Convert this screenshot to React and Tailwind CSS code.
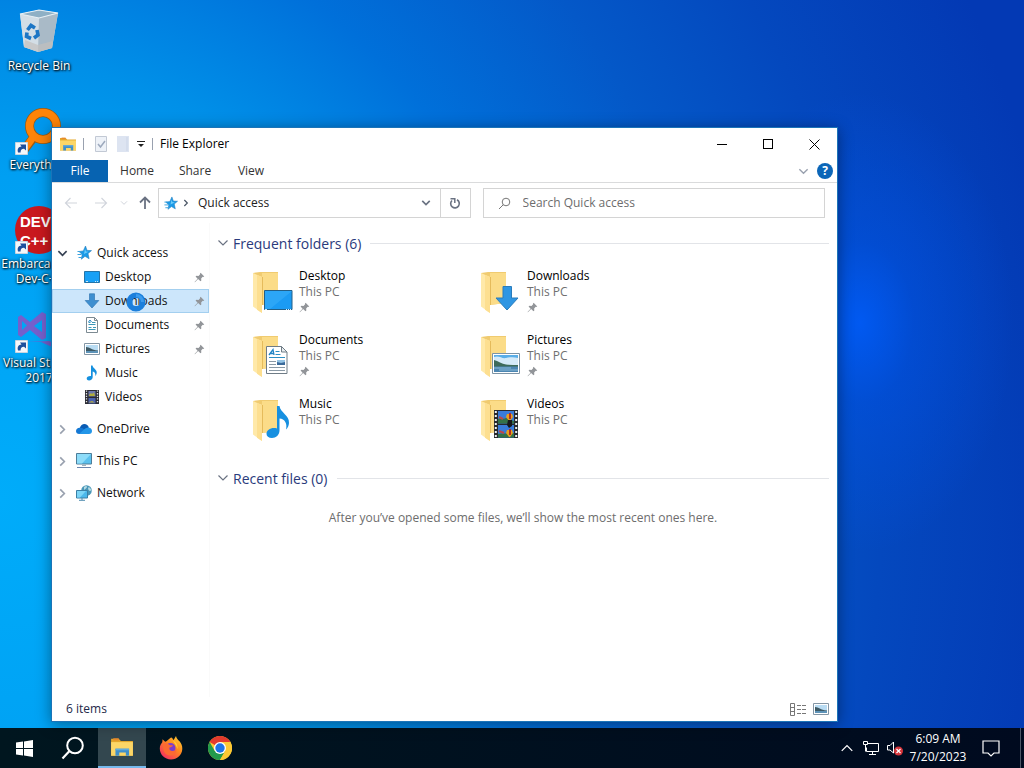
import React, { useState } from 'react';

/* ---------- Small icons ---------- */

const FolderIcon = ({ className }) => (
    <svg viewBox="0 0 22 20" className={className} aria-hidden="true">
        <path d="M1 2.500h7l2 2h11V18H1z" fill="#e3a72c" />
        <path d="M3 2h5v2H3z" fill="#e8892b" />
        <path d="M1 5.500h20V18H1z" fill="#fcd667" />
        <path d="M5 18v-6.500h12.500V18h-3v-3h-6v3z" fill="#3f8fcb" />
        <path d="M5 11.500h12.500v1.500H5z" fill="#62abdc" />
    </svg>
);

const StarIcon = ({ className }) => (
    <svg viewBox="0 0 16 16" className={className} aria-hidden="true">
        <path d="M9.500 1l1.500 4.400 4.500.2-3.500 3 1.100 5.100-4.100-2.400-3.700 2.900.9-4.700L3 6.500l4.300-.6z" fill="#1a9ae8" stroke="#2380c0" strokeWidth=".6" />
        <path d="M9 4l1 2.500 2.500.3L8 9z" fill="#6ccbf8" />
        <path d="M1.500 6.500h3M1.500 9.500h4M2.500 12.500h3" stroke="#39a2df" strokeWidth="1" />
    </svg>
);

const PinIcon = ({ className }) => (
    <svg viewBox="0 0 12 12" className={className} aria-hidden="true">
        <path d="M7.200.8l4 4-1.200.6-.5-.2L7.800 7l.2 2.300-.9.900-2.600-2.500L1 11.300l-.4-.4 3.300-3.600L1.700 5l1-.9 2.200.3L6.700 2.500l-.2-.6z" fill="#929599" />
    </svg>
);

const ChevronDown = ({ className, width = 1.5 }) => (
    <svg viewBox="0 0 12 12" className={className} aria-hidden="true">
        <path d="M1.500 3.500L6 8l4.500-4.500" fill="none" stroke="currentColor" strokeWidth={width} />
    </svg>
);

const ChevronRight = ({ className, width = 1.5 }) => (
    <svg viewBox="0 0 12 12" className={className} aria-hidden="true">
        <path d="M3.500 1.500L8 6l-4.500 4.500" fill="none" stroke="currentColor" strokeWidth={width} />
    </svg>
);

const ArrowIcon = ({ className, width = 1.2 }) => (
    <svg viewBox="0 0 14 14" className={className} aria-hidden="true">
        <path d="M13 7H1.500M6.500 2l-5 5 5 5" fill="none" stroke="currentColor" strokeWidth={width} />
    </svg>
);

const DesktopSmall = () => (
    <svg viewBox="0 0 16 16" className="size-4" aria-hidden="true">
        <path d="M.5 2.500h15v11H.5z" fill="#18a0f5" stroke="#2474a8" />
        <path d="M2 12.500h2M11 12.500h1M13 12.500h1" stroke="#c8e8fb" />
    </svg>
);

const DownloadSmall = () => (
    <svg viewBox="0 0 16 16" className="size-4" aria-hidden="true">
        <path d="M5.500.8h5v6.700h4.300L8 15 1.200 7.500h4.300z" fill="#3e8fd0" stroke="#3478b4" strokeWidth=".7" />
    </svg>
);

const DocumentSmall = () => (
    <svg viewBox="0 0 16 16" className="size-4" aria-hidden="true">
        <path d="M2.500.5h8l3 3v12h-11z" fill="#fff" stroke="#7d8a92" />
        <path d="M10.500.5v3h3" fill="none" stroke="#7d8a92" />
        <path d="M4.500 5.500h2M8 5.500h3.500M4.500 7.500h7M4.500 10.500h3M9 10.500h3M4.500 12.500h7" stroke="#3c97b8" />
        <path d="M4.500 5l1.500-2 1.500 2" fill="none" stroke="#2788c8" />
    </svg>
);

const PictureSmall = ({ className = 'size-4' }) => (
    <svg viewBox="0 0 16 16" className={className} aria-hidden="true">
        <path d="M.5 2.500h15v11H.5z" fill="#fff" stroke="#8496a5" />
        <path d="M2 4h12v8H2z" fill="#b9dcf3" />
        <path d="M2 6c4 0 5 3 12 3.500V10H2z" fill="#3d5964" />
        <path d="M2 10h12v2H2z" fill="#5d93b8" />
    </svg>
);

const MusicSmall = () => (
    <svg viewBox="0 0 16 16" className="size-4" aria-hidden="true">
        <path d="M7 .5h1.500c.4 3 4.700 4 4.200 7.500-.2 1.500-.8 2.300-1.500 3 .7-2.500-.5-4.300-2.500-4.500V12c0 2-1.700 3.500-3.700 3.500-1.300 0-2.300-.7-2.300-1.900C2.700 12 4.500 10.700 7 11z" fill="#1590df" />
    </svg>
);

const VideoSmall = () => (
    <svg viewBox="0 0 16 16" className="size-4" aria-hidden="true">
        <path d="M1 1h14v14H1z" fill="#2b2b33" />
        <path d="M2.500 1.500v13M13.500 1.500v13" stroke="#e3e3e3" strokeWidth="1.300" strokeDasharray="1.300 1.300" />
        <path d="M4.500 2h7v5.500h-7z" fill="#6d78ae" />
        <path d="M4.500 9h7v5.500h-7z" fill="#4d63ae" />
        <path d="M5 6l2-2 1 1 2-1.500 1 3.500H5zM5 13l3-1 3 1.500H5z" fill="#b3ae3d" />
    </svg>
);

const CloudIcon = () => (
    <svg viewBox="0 0 16 16" className="size-4" aria-hidden="true">
        <path d="M3.800 7C4.500 4.200 6.500 3 8.300 3c2.200 0 4 1.300 4.500 3.500L9 10z" fill="#0a5cb4" />
        <path d="M3.500 6.800c2-.5 3.500.5 5.500 2l4 4.200H3.200C1.300 13 0 11.700 0 10c0-1.800 1.500-3.200 3.500-3.200z" fill="#1478d4" />
        <path d="M8 8.500c1.500-1.500 3-2.200 4.800-2 2 .2 3.200 1.700 3.200 3.500 0 1.700-1.200 3-3 3H3z" fill="#2396e8" />
    </svg>
);

const ComputerIcon = () => (
    <svg viewBox="0 0 16 16" className="size-4" aria-hidden="true">
        <path d="M.5.5h15v10.500H.5z" fill="#5bc1ee" stroke="#4d7d99" />
        <path d="M1 1h14L6 10.500H1z" fill="#8ddcf9" />
        <path d="M6 11.500h4v1.500H6z" fill="#9fb1bd" />
        <path d="M1 14.500h14" stroke="#6a86ae" />
    </svg>
);

const NetworkIcon = () => (
    <svg viewBox="0 0 16 16" className="size-4" aria-hidden="true">
        <circle cx="10.500" cy="5.500" r="5.300" fill="#4a97b8" />
        <path d="M8 2c2-1.500 3-1 3 0S9 4 8 5zM12.500 2c1.500.5 2.800 2 3 3.500l-2 .5-1.500-2z" fill="#b5dbe4" />
        <path d="M.5 5.500h11v7.500H.5z" fill="#4cb8eb" stroke="#3b7fa5" />
        <path d="M1 6h9l-6 6.500H1z" fill="#7cd5f7" />
        <path d="M6 13v2M3 15.300h6" stroke="#4f8db0" />
    </svg>
);

/* ---------- Large folder tiles ---------- */

const overlays = {
    desktop: (
        <g>
            <path d="M11.500 18.500h27.500v19H11.500z" fill="#1b9bf3" stroke="#245f86" />
            <path d="M12 19h27L17 37h-5z" fill="#38adf8" opacity=".6" />
            <path d="M12 37.500h2M33 37.500h1M35 37.500h1M37 37.500h1" stroke="#d7effd" />
        </g>
    ),
    downloads: (
        <path d="M22 14.500h8.500V26H37L26 38 15 26h7z" fill="#2f96e3" stroke="#2a7cbc" />
    ),
    documents: (
        <g>
            <path d="M13.500 10.500h15l5.500 5.500v21.500H13.500z" fill="#fff" stroke="#6f7c86" />
            <path d="M28.500 10.500V16H34z" fill="#e8edf0" stroke="#6f7c86" />
            <path d="M16 19l4-5.500 1 5.500M17.500 17.500h3.500" fill="none" stroke="#1f83c5" strokeWidth="1.300" />
            <path d="M22.500 15.500h4M22.500 18.500h5M16 21.500h16" stroke="#2b8fc5" />
            <path d="M16 25.500h7M16 28.500h7M16 31.500h16M16 34.500h16" stroke="#8a99a5" />
            <path d="M24 24h8v5h-8z" fill="#3b6a9a" />
            <path d="M24 24h8v2l-4 1-4-1z" fill="#95c4e5" />
        </g>
    ),
    pictures: (
        <g>
            <path d="M11.500 17.500h27v20h-27z" fill="#fff" stroke="#7c93a5" />
            <path d="M13 19h24v17H13z" fill="#5aaee8" />
            <path d="M13 21c5-2 8 2 12 1s8-1 12 0v8H13z" fill="#d5eaf8" />
            <path d="M13 24c4 1 8 4 12 4.500s8 .5 12 .5v2H13z" fill="#3e6b5a" />
            <path d="M13 30.500h24V36H13z" fill="#4c86b2" />
            <path d="M13 32h17M18 34h19" stroke="#8dbbd8" />
        </g>
    ),
    music: (
        <path d="M24 6h2.500c1 7 10 9 9.500 17-.2 3-1.300 5-3 6.500 1.500-6-1.200-10.500-6.500-11v12c0 4.500-3.500 7.500-7.500 7.500-3.500 0-5.500-1.800-5.500-4.200 0-4 5-6.800 10.500-5.300z" fill="#1790e0" />
    ),
    videos: (
        <g>
            <path d="M13 10h24v28H13z" fill="#27292d" />
            <path d="M14.800 11v27M35.200 11v27" stroke="#edf0f2" strokeWidth="2" strokeDasharray="2 2" />
            <path d="M17 11h16v12.500H17zM17 25h16v12.500H17z" fill="#397bd9" />
            <path d="M17 19c3-2 5 1 8-1l8 3v2.500H17zM17 34c4-1 8 0 16-1v4.500H17z" fill="#347247" />
            <path d="M26 14h5l1 3-3 4h-1l-3-4zM26 30h5l1 3-3 4h-1l-3-4z" fill="#e8a01c" />
            <path d="M28 13h2v6h-2zM28 29h2v6h-2z" fill="#b32c22" />
            <path d="M27 20h4v6l-3 2-2-3z" fill="#17181c" />
            <path d="M18 17l4 2M18 31l5 2" stroke="#bc4848" strokeWidth="2" />
        </g>
    ),
};

const FolderTile = ({ kind }) => (
    <svg viewBox="0 0 42 44" className="h-11 w-[42px] shrink-0" aria-hidden="true">
        <path d="M0 1l7-1h18v31l-17 2z" fill="#f0cb70" />
        <path d="M9 1h16v30L9 33z" fill="#fbdc88" />
        <path d="M0 1l9 4v36L0 34.500z" fill="#ffe9a9" />
        <path d="M4 3l5 2v36l-5-3.300z" fill="#fddf90" />
        <path d="M9.500 5v28" stroke="#e5bb5b" />
        {overlays[kind]}
    </svg>
);

/* ---------- Desktop icons ---------- */

const ShortcutBadge = () => (
    <g>
        <path d="M.5 35.500h12v12H.5z" fill="#f5f7fa" stroke="#c9d4df" />
        <path d="M3 45.500c-1-4 .5-5.500 3.500-6L5 37.500h6v6l-2-1.800c-2.500 0-3.600 1.500-3.400 3.800z" fill="#1d4f9c" />
    </g>
);

const RecycleBinIcon = () => (
    <svg viewBox="0 0 48 48" className="size-12" aria-hidden="true">
        <path d="M5 6l19-4 19 3-6 35-14 4-14-5z" fill="#cdd9e2" />
        <path d="M5 6l19 4v34L9 39z" fill="#d3dee6" />
        <path d="M24 10l19-5-6 35-14 4z" fill="#a9bac7" />
        <path d="M5 6l19-4 19 3-19 5z" fill="#8fb0c5" stroke="#e8f0f5" strokeWidth="1.200" />
        <path d="M10 32l13 5v7L9 39zM23 37l15-4-1 7-14 4z" fill="#c3c0bd" opacity=".7" />
        <g fill="none" stroke="#1c76c5" strokeWidth="3.600">
            <path d="M12.500 22l3.500-4.500 4 2.500" />
            <path d="M22 22l1 5-4 3" />
            <path d="M16 30.500l-4.500-2 .5-4" />
        </g>
    </svg>
);

const EverythingIcon = () => (
    <svg viewBox="0 0 48 48" className="size-12" aria-hidden="true">
        <path d="M19 30L9 43" stroke="#9a5a12" strokeWidth="9" />
        <circle cx="28" cy="19" r="13.500" fill="none" stroke="#9a5a12" strokeWidth="9" />
        <path d="M19 29L9 43" stroke="#ff8408" strokeWidth="7" />
        <circle cx="28" cy="19" r="13.500" fill="none" stroke="#ff8408" strokeWidth="7.500" />
        <ShortcutBadge />
    </svg>
);

const DevCppIcon = () => (
    <svg viewBox="0 0 48 48" className="size-12" aria-hidden="true">
        <circle cx="24" cy="24" r="24" fill="#c9181e" />
        <text x="5" y="21" fontFamily="Liberation Sans, sans-serif" fontSize="15" fontWeight="700" fill="#fff">DEV</text>
        <text x="5" y="40" fontFamily="Liberation Sans, sans-serif" fontSize="15" fontWeight="700" fill="#fff">C++</text>
        <ShortcutBadge />
    </svg>
);

const VisualStudioIcon = () => (
    <svg viewBox="0 0 48 48" className="size-12" aria-hidden="true">
        <path d="M3 12l3-2 9 7L27 7l4 2v24l-4 2-12-10-9 7-3-2zM7 16v9l5-4.500zM19 21l8 6V15z" fill="#7460cc" fillRule="evenodd" />
        <path d="M12 37h14l22 10v-5L34 36z" fill="#7460cc" />
        <ShortcutBadge />
    </svg>
);

const desktopIcons = [
    { label: 'Recycle Bin', Icon: RecycleBinIcon },
    { label: 'Everything', Icon: EverythingIcon },
    { label: 'Embarcadero Dev-C++', Icon: DevCppIcon },
    { label: 'Visual Studio 2017', Icon: VisualStudioIcon },
];

const DesktopIcons = () => (
    <div className="flex w-[78px] flex-col pt-2">
        {desktopIcons.map(({ label, Icon }) => (
            <button key={label} className="flex h-[99px] flex-col items-center gap-[2px]">
                <Icon />
                <span className="text-center leading-[15px] text-white [text-shadow:1px_1px_2px_#000,0_0_3px_#000]">{label}</span>
            </button>
        ))}
    </div>
);

/* ---------- Explorer window ---------- */

const TitleBar = () => (
    <header className="flex h-8 items-center pl-[7px]">
        <FolderIcon className="h-4 w-[18px]" />
        <span className="ml-[6px] h-3 w-px bg-gray-400" />
        <button aria-label="Properties" className="ml-[10px]">
            <svg viewBox="0 0 14 16" className="h-4 w-[14px]">
                <path d="M1.500.5h11v15h-11z" fill="#eef2f8" stroke="#c2c9d4" />
                <path d="M4 8l2.500 3L11 5" fill="none" stroke="#9da9bd" strokeWidth="1.500" />
            </svg>
        </button>
        <button aria-label="New folder" className="ml-2">
            <svg viewBox="0 0 14 16" className="h-4 w-[14px]">
                <path d="M1 0h12v16H1z" fill="#dde4f1" />
                <path d="M11 1v14" stroke="#cbd5e7" />
            </svg>
        </button>
        <button aria-label="Customize Quick Access Toolbar" className="ml-[7px]">
            <svg viewBox="0 0 8 8" className="size-2">
                <path d="M0 1.500h8" stroke="#222" />
                <path d="M1 4h6L4 7z" fill="#222" />
            </svg>
        </button>
        <span className="ml-[7px] h-3 w-px bg-gray-400" />
        <h1 className="ml-[7px] flex-1 text-black">File Explorer</h1>
        <button aria-label="Minimize" className="flex h-8 w-[46px] items-center justify-center">
            <span className="h-px w-[10px] bg-black" />
        </button>
        <button aria-label="Maximize" className="flex h-8 w-[46px] items-center justify-center">
            <span className="size-[10px] border border-black" />
        </button>
        <button aria-label="Close" className="flex h-8 w-[46px] items-center justify-center">
            <svg viewBox="0 0 11 11" className="size-[11px]">
                <path d="M.5.5l10 10M10.500.5l-10 10" stroke="#000" />
            </svg>
        </button>
    </header>
);

const Ribbon = () => (
    <div className="flex h-[23px] items-stretch border-b border-[#dadbdc] text-[#333]">
        <button className="w-14 bg-[#0763b1] text-white">File</button>
        <button className="w-[58px]">Home</button>
        <button className="w-[58px]">Share</button>
        <button className="w-[54px]">View</button>
        <div className="flex flex-1 items-center justify-end gap-2 pr-1">
            <button aria-label="Expand the Ribbon" className="text-gray-400">
                <ChevronDown className="size-[11px]" />
            </button>
            <button aria-label="Help" className="flex size-4 items-center justify-center rounded-full bg-[#0b66b8] font-bold text-white">?</button>
        </div>
    </div>
);

const AddressRow = () => (
    <div className="flex h-10 items-center pr-3">
        <button aria-label="Back" className="ml-3 text-gray-300"><ArrowIcon className="size-[14px]" /></button>
        <button aria-label="Forward" className="ml-4 text-gray-300"><ArrowIcon className="size-[14px] rotate-180" /></button>
        <button aria-label="Recent locations" className="ml-3 text-gray-300"><ChevronDown className="size-2" /></button>
        <button aria-label="Up" className="ml-[10px] text-gray-500"><ArrowIcon className="size-[14px] rotate-90" width={1.8} /></button>
        <div className="ml-[6px] flex h-[30px] flex-[312] items-center border border-[#d4d4d4]">
            <StarIcon className="ml-1 size-[15px]" />
            <ChevronRight className="ml-1 size-2 text-gray-600" width={1.8} />
            <button className="ml-2 flex-1 text-left text-[#222]">Quick access</button>
            <button aria-label="Previous locations" className="mr-[9px] text-gray-500"><ChevronDown className="size-[10px]" width={2} /></button>
            <button aria-label="Refresh" className="flex h-full w-[30px] items-center justify-center border-l border-[#d4d4d4] text-gray-500">
                <svg viewBox="0 0 12 12" className="size-3">
                    <path d="M8 2.800A4.300 4.300 0 1 1 3 3.500" fill="none" stroke="currentColor" strokeWidth="1.600" />
                    <path d="M1.500 1.800h4.300V6" fill="none" stroke="currentColor" strokeWidth="1.500" />
                </svg>
            </button>
        </div>
        <label className="ml-3 flex h-[30px] flex-[342] items-center border border-[#d4d4d4]">
            <svg viewBox="0 0 13 13" className="ml-[14px] size-[13px]" aria-hidden="true">
                <circle cx="8" cy="5" r="3.800" fill="none" stroke="#777" />
                <path d="M5.300 7.700L1 12" stroke="#777" />
            </svg>
            <input type="search" aria-label="Search Quick access" placeholder="Search Quick access" className="ml-3 min-w-0 flex-1 bg-transparent outline-none placeholder:text-[#6d6d6d]" />
        </label>
    </div>
);

const quickItems = [
    { name: 'Desktop', Icon: DesktopSmall, pinned: true },
    { name: 'Downloads', Icon: DownloadSmall, pinned: true },
    { name: 'Documents', Icon: DocumentSmall, pinned: true },
    { name: 'Pictures', Icon: PictureSmall, pinned: true },
    { name: 'Music', Icon: MusicSmall },
    { name: 'Videos', Icon: VideoSmall },
];

const rootItems = [
    { name: 'OneDrive', Icon: CloudIcon },
    { name: 'This PC', Icon: ComputerIcon },
    { name: 'Network', Icon: NetworkIcon },
];

// Busy pointer shown over the hovered row
const BusyCursor = () => (
    <svg viewBox="0 0 20 20" className="pointer-events-none absolute top-[2px] left-[73px] size-5" aria-hidden="true">
        <circle cx="10" cy="10" r="6.800" fill="none" stroke="#1b7fdc" strokeWidth="5.500" />
        <path d="M10 3.500a6.500 6.500 0 0 1 6.500 6.500" fill="none" stroke="#3c9cee" strokeWidth="3" />
    </svg>
);

const Sidebar = () => {
    const [selected, setSelected] = useState('Downloads');

    return (
        <nav className="w-[158px] shrink-0 border-r border-[#fafafa] pt-[18px] text-[#111]">
            <button className="flex h-6 w-full items-center pl-[5px]">
                <ChevronDown className="size-[11px] text-gray-700" width={1.8} />
                <StarIcon className="ml-2 size-4" />
                <span className="ml-[5px]">Quick access</span>
            </button>
            {quickItems.map(({ name, Icon, pinned }) => (
                <button
                    key={name}
                    onClick={() => setSelected(name)}
                    className={`relative flex h-6 w-[157px] items-center border pr-[3px] pl-[31px] ${selected === name ? 'border-[#a3cfef] bg-[#cce6fb]' : 'border-transparent'}`}
                >
                    <Icon />
                    <span className="ml-[5px] flex-1 text-left">{name}</span>
                    {pinned && <PinIcon className="size-[11px]" />}
                    {name === 'Downloads' && <BusyCursor />}
                </button>
            ))}
            {rootItems.map(({ name, Icon }) => (
                <button key={name} className="mt-2 flex h-6 w-full items-center pl-[5px]">
                    <ChevronRight className="size-[11px] text-gray-400" width={1.8} />
                    <span className="ml-2"><Icon /></span>
                    <span className="ml-[5px]">{name}</span>
                </button>
            ))}
        </nav>
    );
};

const folders = [
    { name: 'Desktop', kind: 'desktop', pinned: true },
    { name: 'Downloads', kind: 'downloads', pinned: true },
    { name: 'Documents', kind: 'documents', pinned: true },
    { name: 'Pictures', kind: 'pictures', pinned: true },
    { name: 'Music', kind: 'music' },
    { name: 'Videos', kind: 'videos' },
];

const GroupHeader = ({ children }) => (
    <h2 className="flex h-5 items-center text-[14px] text-[#2a3a7c]">
        <ChevronDown className="mr-1 size-3 text-gray-500" width={1.2} />
        {children}
        <span className="ml-[9px] h-px flex-1 bg-[#e2e4e8]" />
    </h2>
);

const Content = () => (
    <main className="flex-1 pt-[10px] pr-2 pl-[7px]">
        <GroupHeader>Frequent folders (6)</GroupHeader>
        <div className="grid grid-cols-[228px_228px] pt-[15px] pl-9">
            {folders.map(({ name, kind, pinned }) => (
                <button key={name} className="flex h-16 gap-1 text-left">
                    <span className="pt-1"><FolderTile kind={kind} /></span>
                    <span className="flex flex-col leading-4">
                        <span className="text-black">{name}</span>
                        <span className="text-[#707070]">This PC</span>
                        {pinned && <PinIcon className="mt-[2px] size-[11px]" />}
                    </span>
                </button>
            ))}
        </div>
        <div className="pt-2">
            <GroupHeader>Recent files (0)</GroupHeader>
            <p className="pt-[21px] text-center text-[#6d6d6d]">After you’ve opened some files, we’ll show the most recent ones here.</p>
        </div>
    </main>
);

const StatusBar = () => (
    <footer className="flex h-6 items-center pr-2 pl-[14px] text-[#1e2a4a]">
        <span className="flex-1">6 items</span>
        <button aria-label="Details view" className="mr-[6px]">
            <svg viewBox="0 0 17 13" className="h-[13px] w-[17px]">
                <path d="M.5.5h4v12h-4zM.5 4.500h4M.5 8.500h4" fill="none" stroke="#777" />
                <path d="M7 2.500h4M12 2.500h4M7 6.500h4M12 6.500h4M7 10.500h4M12 10.500h4" stroke="#777" />
            </svg>
        </button>
        <button aria-label="Large icons view"><PictureSmall /></button>
    </footer>
);

const ExplorerWindow = () => (
    <section className="absolute top-[127px] right-[186px] bottom-[6px] left-[51px] flex flex-col border border-[#1b74b8] bg-white shadow-[0_2px_14px_rgba(0,0,0,0.4)]">
        <TitleBar />
        <Ribbon />
        <AddressRow />
        <div className="flex min-h-0 flex-1">
            <Sidebar />
            <Content />
        </div>
        <StatusBar />
    </section>
);

/* ---------- Taskbar ---------- */

const WindowsLogo = () => (
    <svg viewBox="0 0 17 17" className="size-[17px]">
        <path d="M0 2.500l7-1V8H0zM8 1.400L17 0v8H8zM0 9h7v6.500l-7-1zM8 9h9v8l-9-1.400z" fill="#fff" />
    </svg>
);

const SearchLogo = () => (
    <svg viewBox="0 0 24 24" className="size-6">
        <circle cx="14" cy="9.500" r="7.800" fill="none" stroke="#fff" strokeWidth="2" />
        <path d="M8.500 15L1.500 22.500" stroke="#fff" strokeWidth="2.200" />
    </svg>
);

const FirefoxLogo = () => (
    <svg viewBox="0 0 24 24" className="size-6">
        <defs>
            <linearGradient id="fox" x1="1" y1="0" x2="0.2" y2="1">
                <stop offset="0" stopColor="#ffe03a" />
                <stop offset=".45" stopColor="#ff8a1f" />
                <stop offset="1" stopColor="#f42c62" />
            </linearGradient>
        </defs>
        <path d="M12 1.500c1.500 0 1.800 2 2.600 2.600L17 0c.5 2.500 2 4 3.500 5.200C22 7 23.500 9.500 23.300 13c-.3 6-5.300 10.500-11.300 10.500C5.700 23.500.8 18.700.8 12.600c0-3.100 1.300-5 2.500-6.400l.2-3 2.700 2.600C8 5 9 4 12 1.500z" fill="url(#fox)" />
        <circle cx="11.500" cy="12" r="5" fill="#7a3dd0" />
        <path d="M4 8c2-1.500 5-.8 7 1.200h3c-.3 1.500-2 1.800-3.500 2.300-.7 2 .8 3.500 3 3.500 2 0 3-1 4-1.500-.3 4-3 6-6.500 6-4 0-7.500-3.500-7-11.500z" fill="#fb6a32" />
        <path d="M14 4.500c3 1.500 5 4.500 4.500 8.500L17 9.500z" fill="#ffd23a" />
    </svg>
);

const ChromeLogo = () => (
    <svg viewBox="0 0 24 24" className="size-6">
        <circle cx="12" cy="12" r="12" fill="#fcc934" />
        <path d="M12 12L1.600 6A12 12 0 0 1 22.400 6z" fill="#e33b2e" />
        <path d="M1.600 6A12 12 0 0 0 12 24l5.200-9L12 12 6.800 15z" fill="#229a4b" />
        <path d="M12 6h10.400A12 12 0 0 1 12 24l5.200-9z" fill="#fcc934" />
        <circle cx="12" cy="12" r="6" fill="#fff" />
        <circle cx="12" cy="12" r="4.700" fill="#1d74e8" />
    </svg>
);

const TaskButton = ({ label, active, children }) => (
    <button
        aria-label={label}
        className={`flex h-10 w-12 items-center justify-center ${active ? 'border-b-2 border-[#76b9ed] bg-[#33474f]' : ''}`}
    >
        {children}
    </button>
);

const Tray = () => (
    <div className="flex h-full items-center text-white">
        <button aria-label="Show hidden icons">
            <ChevronDown className="size-[14px] rotate-180" width={1.1} />
        </button>
        <button aria-label="Network" className="ml-2">
            <svg viewBox="0 0 18 16" className="h-4 w-[18px]">
                <path d="M5.500 3.500h11v8h-12v-4M10.500 11.500v3M7 14.500h7" fill="none" stroke="#fff" />
                <path d="M1.500 1.500h4v3h-4zM3.500 4.500v7" fill="none" stroke="#fff" />
            </svg>
        </button>
        <button aria-label="Volume muted" className="ml-[6px]">
            <svg viewBox="0 0 18 16" className="h-4 w-[18px]">
                <path d="M1.500 5.500H4L7.500 2v11L4 10H1.500z" fill="none" stroke="#fff" />
                <circle cx="12.500" cy="11" r="4.500" fill="#d5343a" />
                <path d="M10.500 9l4 4M14.500 9l-4 4" stroke="#fff" strokeWidth="1.200" />
            </svg>
        </button>
        <button className="w-[68px] text-center leading-[18px]">
            6:09 AM
            <br />
            7/20/2023
        </button>
        <button aria-label="Notifications" className="ml-[10px]">
            <svg viewBox="0 0 18 18" className="size-[18px]">
                <path d="M1 2h16v12h-5l-3 3-3-3H1z" fill="none" stroke="#fff" strokeWidth="1.200" />
            </svg>
        </button>
        <span className="mr-[3px] ml-5 h-full w-px bg-[#4c5666]" />
    </div>
);

const Taskbar = () => (
    <footer className="flex h-10 items-center justify-between bg-linear-to-r from-[#00161f] to-[#000a1f]">
        <div className="flex gap-px">
            <TaskButton label="Start"><WindowsLogo /></TaskButton>
            <TaskButton label="Search"><SearchLogo /></TaskButton>
            <TaskButton label="File Explorer" active><FolderIcon className="h-[22px] w-6" /></TaskButton>
            <TaskButton label="Firefox"><FirefoxLogo /></TaskButton>
            <TaskButton label="Chrome"><ChromeLogo /></TaskButton>
        </div>
        <Tray />
    </footer>
);

const App = () => {
    return (
        <div className="flex h-screen flex-col overflow-hidden bg-[radial-gradient(ellipse_15%_30%_at_84%_42%,rgba(0,92,250,0.85)_0%,rgba(0,84,235,0.45)_35%,transparent_100%),radial-gradient(ellipse_105%_150%_at_0%_65%,#00acfa_0%,#009ff2_28%,#0090e8_38%,#0070da_52%,#0458c8_68%,#0448be_82%,#0339b4_100%)] font-['Open_Sans',sans-serif] text-[12px]">
            <div className="relative flex-1">
                <DesktopIcons />
                <ExplorerWindow />
            </div>
            <Taskbar />
        </div>
    );
};

export default App;
